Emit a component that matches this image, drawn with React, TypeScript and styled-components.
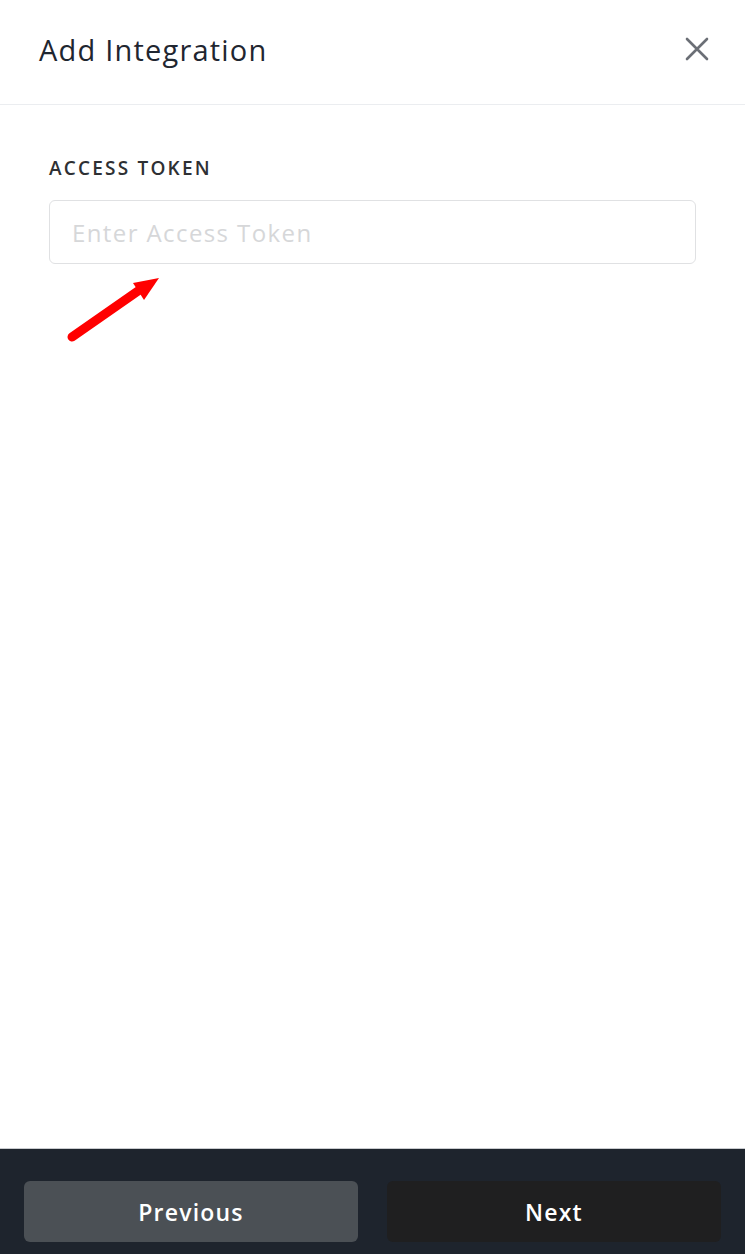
import React from "react";
import styled, { createGlobalStyle } from "styled-components";

const GlobalStyle = createGlobalStyle`
  html, body {
    margin: 0;
    padding: 0;
    background: #ffffff;
  }
  body {
    font-family: "Open Sans", Lato, Arial, sans-serif;
  }
  * {
    box-sizing: border-box;
  }
`;

const App: React.FC = () => {
  return (
    <>
      <GlobalStyle />
      <Page>
        <Header>
          <Title>Add Integration</Title>
          <CloseButton aria-label="close">
            <svg width="24" height="24" viewBox="0 0 24 24" fill="none">
              <path
                d="M2 2L22 22M22 2L2 22"
                stroke="#6b6f76"
                strokeWidth="2.6"
                strokeLinecap="round"
              />
            </svg>
          </CloseButton>
        </Header>

        <Body>
          <Field>
            <Label>ACCESS TOKEN</Label>
            <TokenWrap>
              <Input placeholder="Enter Access Token" />
              <Pointer width="100" height="72" viewBox="0 0 100 72">
                <line
                  x1="8"
                  y1="65"
                  x2="74"
                  y2="19"
                  stroke="#ff0000"
                  strokeWidth="9"
                  strokeLinecap="round"
                />
                <polygon points="95,6 69,11 80,28" fill="#ff0000" />
              </Pointer>
            </TokenWrap>
          </Field>
        </Body>

        <Footer>
          <FooterButton $variant="secondary">Previous</FooterButton>
          <FooterButton $variant="primary">Next</FooterButton>
        </Footer>
      </Page>
    </>
  );
};

export default App;

const Page = styled.div`
  min-height: 100vh;
  display: flex;
  flex-direction: column;
  background: #ffffff;
`;

const Header = styled.header`
  height: 105px;
  display: flex;
  align-items: center;
  justify-content: space-between;
  padding: 0 36px 6px 39px;
  border-bottom: 1px solid #ebedf0;
`;

const Title = styled.h1`
  margin: 0;
  font-size: 29px;
  font-weight: 400;
  color: #1f2630;
  letter-spacing: 1.2px;
`;

const CloseButton = styled.button`
  border: 0;
  background: none;
  padding: 0;
  display: flex;
  cursor: pointer;
`;

const Body = styled.main`
  flex: 1;
  padding: 50px 49px 0 49px;
`;

const Field = styled.div`
  display: flex;
  flex-direction: column;
  gap: 19px;
`;

const Label = styled.label`
  font-size: 19px;
  font-weight: 600;
  color: #2e3033;
  letter-spacing: 2.2px;
`;

const TokenWrap = styled.div`
  position: relative;
`;

const Input = styled.input`
  width: 100%;
  height: 64px;
  border: 1px solid #e0e1e3;
  border-radius: 6px;
  padding: 0 22px;
  font-family: "Open Sans", Lato, Arial, sans-serif;
  font-size: 24px;
  letter-spacing: 1.4px;
  color: #333;
  outline: none;

  &::placeholder {
    color: #d6d7d9;
  }
`;

const Pointer = styled.svg`
  position: absolute;
  left: 15px;
  top: 72px;
`;

const Footer = styled.footer`
  display: grid;
  grid-template-columns: 1fr 1fr;
  gap: 29px;
  padding: 32px 24px 12px 24px;
  background: #1e242d;
  border-top: 1px solid #c9cbcf;
`;

const FooterButton = styled.button<{ $variant: "primary" | "secondary" }>`
  height: 61px;
  border: 0;
  border-radius: 6px;
  background: ${(p) => (p.$variant === "primary" ? "#1f1f20" : "#4b5055")};
  color: #ffffff;
  font-family: "Open Sans", Lato, Arial, sans-serif;
  font-size: 23px;
  font-weight: 600;
  letter-spacing: 1.2px;
  cursor: pointer;
`;
